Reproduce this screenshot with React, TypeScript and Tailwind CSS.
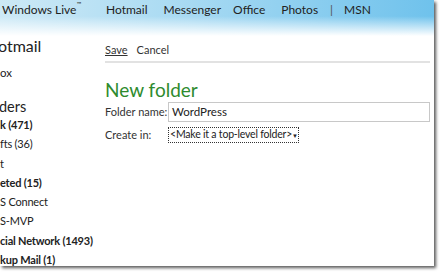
const navLinks = [
  { label: 'Hotmail', gap: 'mr-[16px]' },
  { label: 'Messenger', gap: 'mr-[12px]' },
  { label: 'Office', gap: 'mr-[16px]' },
  { label: 'Photos', gap: 'mr-[12px]' },
];

const folders = [
  { label: 'k (471)', bold: true },
  { label: 'fts (36)', bold: false },
  { label: 't', bold: false },
  { label: 'eted (15)', bold: true },
  { label: 'S Connect', bold: false },
  { label: 'S-MVP', bold: false },
  { label: 'cial Network (1493)', bold: true },
  { label: 'kup Mail (1)', bold: true },
];

export default function App() {
  return (
    <div className="h-[273px] w-[440px] overflow-hidden bg-white font-['Segoe_UI',Lato,sans-serif] text-[#222]">
      <div className="h-[266px] w-[434px] overflow-hidden bg-white shadow-[2px_2px_3px_rgba(0,0,0,0.65)]">
        {/* Top nav */}
        <header className="h-[36px] bg-[linear-gradient(to_bottom,rgba(255,255,255,0)_0%,rgba(255,255,255,0)_45%,#ffffff_100%),linear-gradient(to_right,#cde9f6_0%,#a6d9f2_45%,#6fc2ec_100%)]">
          <nav className="flex items-center whitespace-nowrap pl-[2px] pt-[1px] text-[12px] leading-[18px]">
            <span className="mr-[25px]">
              Windows Live<sup className="align-super text-[6px]">™</sup>
            </span>
            {navLinks.map((l) => (
              <span key={l.label} className={l.gap}>
                {l.label}
              </span>
            ))}
            <span className="mr-[11px] text-[#555]">|</span>
            <span>MSN</span>
          </nav>
        </header>

        <div className="flex">
          {/* Folder list */}
          <aside className="w-[105px] shrink-0">
            <div className="-ml-[2px] text-[16px] leading-[20px]">otmail</div>
            <div className="mt-[9px] text-[11.5px] leading-[16px]">ox</div>
            <div className="-ml-[1px] mt-[16px] text-[14.5px] leading-[20px]">ders</div>
            <ul className="-mt-[2px] text-[11px] leading-[19.3px] tracking-[-0.2px]">
              {folders.map((f) => (
                <li key={f.label} className={`whitespace-nowrap ${f.bold ? 'font-bold' : ''}`}>
                  {f.label}
                </li>
              ))}
            </ul>
          </aside>

          {/* Main */}
          <main className="flex-1 pr-[4px]">
            <div className="flex gap-[9px] pt-[6px] text-[11px] leading-[16px] text-[#333]">
              <span className="underline">Save</span>
              <span>Cancel</span>
            </div>
            <div className="mt-[3px] h-[2px] bg-[#e2e2e2]" />

            <h1 className="mt-[16px] text-[19px] leading-[22px] text-[#2e8b2e]">New folder</h1>

            <div className="mt-[1px] flex items-center whitespace-nowrap text-[11px] text-[#333]">
              <span className="w-[63px]">Folder name:</span>
              <div className="flex h-[20px] flex-1 items-center border border-[#c8c8c8] pl-[3px] text-[11.5px] text-[#222]">
                WordPress
              </div>
            </div>

            <div className="mt-[5px] flex items-center whitespace-nowrap text-[11px] text-[#333]">
              <span className="w-[63px]">Create in:</span>
              <div className="flex h-[16px] w-[131px] items-center justify-between border border-dotted border-[#333] pl-[1px] pr-[3px] text-[10.5px] tracking-[-0.2px] text-[#222]">
                <span>&lt;Make it a top-level folder&gt;</span>
                <span className="text-[6px]">▼</span>
              </div>
            </div>
          </main>
        </div>
      </div>
    </div>
  );
}
